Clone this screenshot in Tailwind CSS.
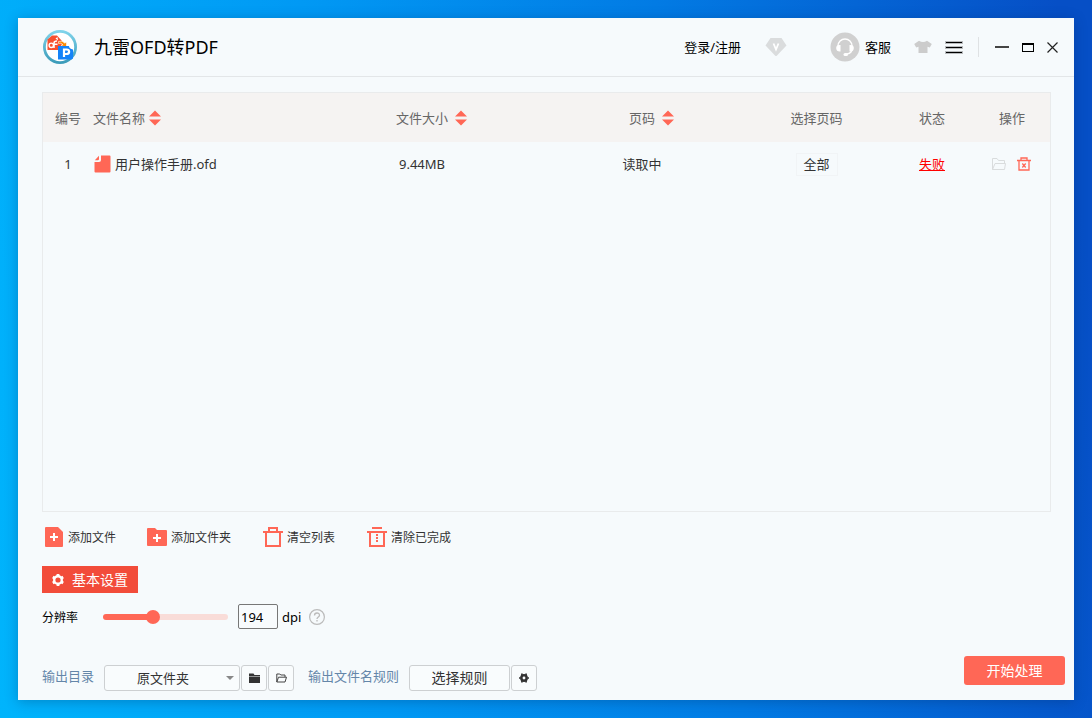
<!DOCTYPE html>
<html lang="zh-CN">
<head>
<meta charset="utf-8">
<meta name="viewport" content="width=device-width, initial-scale=1">
<title>九雷OFD转PDF</title>
<script src="https://cdn.jsdelivr.net/npm/@tailwindcss/browser@4"></script>
</head>
<body class="flex min-h-screen bg-[linear-gradient(83deg,#00b4fc_0%,#0199f4_33%,#027be4_63%,#064fc6_97%)] p-[18px] font-['Noto_Sans','Noto_Sans_CJK_SC',sans-serif] text-[13px] leading-5 text-[#333]">
<div class="flex flex-1 flex-col bg-[#f6fafc] shadow-[0_2px_12px_rgba(0,40,90,0.3)]">

  <header class="flex h-[59px] shrink-0 items-center border-b border-[#e3e6e8] pr-4 pl-6 text-black">
    <svg class="size-9" viewBox="0 0 36 36" aria-hidden="true">
      <defs><linearGradient id="ring" x1="0" y1="0" x2="0" y2="1"><stop offset="0" stop-color="#7fd3ea"/><stop offset="1" stop-color="#3c9cba"/></linearGradient></defs>
      <circle cx="18" cy="18" r="15.6" fill="#fff" stroke="url(#ring)" stroke-width="2.800"/>
      <path d="M5.500 10.500L10 6.500h5L20 12v9H5.500z" fill="#f8502f"/>
      <path d="M13.500 9.500l2-1.500.5 3.500z" fill="#fff"/>
      <circle cx="9.300" cy="16.300" r="2.200" fill="none" stroke="#fff" stroke-width="1.400"/>
      <path d="M12 19v-5q0-2 3-2M11.500 15.200h4" fill="none" stroke="#fff" stroke-width="1.500"/>
      <path d="M16.500 12.500q4-1.500 6 1.500l2-.8v5.300l-5.500-2 1.700-1q-1.500-2-4.200-1z" fill="#ff8a00" stroke="#fff" stroke-width=".6"/>
      <path d="M16 17h11q0 2.500 4 3.500v9l-1.500 1H16z" fill="#1583f8"/>
      <path d="M22 28v-7.500h2.500c3.500 0 3.500 4.500 0 4.500h-3.500" fill="none" stroke="#fff" stroke-width="2.200"/>
    </svg>
    <h1 class="ml-4 text-lg">九雷OFD转PDF</h1>
    <div class="ml-auto flex items-center">
      <a href="#" class="mr-6">登录/注册</a>
      <button type="button" aria-label="会员" class="mr-[43px]">
        <svg class="h-5 w-[22px]" viewBox="0 0 22 20"><path d="M5.500 1h11L21.500 8.500 12 18.500q-1 1-2 0L.5 8.500z" fill="#dadcdd"/><path d="M8.500 6.500l2.500 6 2.500-6" fill="none" stroke="#fff" stroke-width="1.800"/></svg>
      </button>
      <a href="#" class="mr-[23px] flex items-center gap-[5px]">
        <svg class="size-[30px]" viewBox="0 0 30 30" aria-hidden="true"><circle cx="15" cy="15" r="14.500" fill="#d0d0d0"/><path d="M8 15v-1a7 7 0 0 1 14 0v3q0 4-5 5" fill="none" stroke="#fff" stroke-width="1.400"/><path d="M10.500 13v6.500q-4 .5-4.300-3.200t4.300-3.300zM19.500 13v6.500q4 .5 4.300-3.200t-4.300-3.300z" fill="#fff"/><rect x="13.500" y="21" width="4.500" height="3" rx="1.500" fill="#fff"/></svg>
        <span>客服</span>
      </a>
      <button type="button" aria-label="皮肤" class="mr-[14px]">
        <svg class="h-[14px] w-[18px]" viewBox="0 0 18 14"><path d="M5 .8q4 2.500 8 0L17.800 4l-2 3.500-2.300-.8V13h-9V6.700l-2.300.8L.2 4z" fill="#ccc"/></svg>
      </button>
      <button type="button" aria-label="菜单" class="flex w-4 flex-col gap-1">
        <span class="h-px bg-black outline outline-[#00000040]"></span><span class="h-px bg-black outline outline-[#00000040]"></span><span class="h-px bg-black outline outline-[#00000040]"></span>
      </button>
      <span class="mx-4 h-5 w-px bg-[#dfe2e4]"></span>
      <button type="button" aria-label="最小化" class="mr-[13px] h-[2px] w-[14px] bg-[#444]"></button>
      <button type="button" aria-label="最大化" class="mr-[13px] h-[9px] w-3 border border-t-2 border-black"></button>
      <button type="button" aria-label="关闭"><svg class="size-[11px]" viewBox="0 0 11 11"><path d="M.5 .5l10 10M10.500 .5l-10 10" stroke="#222" stroke-width="1.200"/></svg></button>
    </div>
  </header>

  <main class="flex flex-1 flex-col pt-[15px] pr-[23px] pl-6">
    <div class="min-h-[420px] flex-1 border border-[#e9ebec]">
      <table class="w-full table-fixed border-collapse">
        <colgroup><col class="w-[50px]"><col><col class="w-[222px]"><col class="w-[218px]"><col class="w-[131px]"><col class="w-[100px]"><col class="w-[68px]"></colgroup>
        <thead class="h-[49px] bg-[#f5f3f2] text-[#666]">
          <tr>
            <th class="p-0 font-normal">编号</th>
            <th class="p-0 font-normal"><button type="button" class="flex items-center gap-1">文件名称<svg class="h-4 w-3" viewBox="0 0 12 16" fill="#ff6756" aria-hidden="true"><path d="M6 .5L12 6.500H0zM6 15.500L0 9.500h12z"/></svg></button></th>
            <th class="p-0 font-normal"><button type="button" class="mx-auto flex items-center gap-[7px] pl-[19px]">文件大小<svg class="h-4 w-3" viewBox="0 0 12 16" fill="#ff6756" aria-hidden="true"><path d="M6 .5L12 6.500H0zM6 15.500L0 9.500h12z"/></svg></button></th>
            <th class="p-0 font-normal"><button type="button" class="mx-auto flex items-center gap-[7px] pl-[19px]">页码<svg class="h-4 w-3" viewBox="0 0 12 16" fill="#ff6756" aria-hidden="true"><path d="M6 .5L12 6.500H0zM6 15.500L0 9.500h12z"/></svg></button></th>
            <th class="p-0 font-normal">选择页码</th>
            <th class="p-0 font-normal">状态</th>
            <th class="py-0 pr-2 pl-0 font-normal">操作</th>
          </tr>
        </thead>
        <tbody>
          <tr class="h-11 text-center">
            <td class="p-0">1</td>
            <td class="p-0"><div class="flex items-center gap-1"><svg class="ml-px h-[18px] w-[17px]" viewBox="0 0 17 18" aria-hidden="true"><path d="M7 .5h8.500q1 0 1 1v15q0 1-1 1H1.500q-1 0-1-1V7H5q2 0 2-2zM5 .8V4q0 1.200-1.200 1.200H.8z" fill="#ff6756"/></svg>用户操作手册.ofd</div></td>
            <td class="p-0">9.44MB</td>
            <td class="p-0">读取中</td>
            <td class="p-0"><button type="button" class="h-[23px] w-[42px] border border-[#f1f4f6]">全部</button></td>
            <td class="p-0"><a href="#" class="text-[#f00] underline">失败</a></td>
            <td class="py-0 pr-[10px] pl-0">
              <div class="flex items-center justify-center gap-[11px]">
                <button type="button" aria-label="打开文件夹"><svg class="h-3 w-[14px]" viewBox="0 0 14 12" fill="none" stroke="#d9dcdd"><path d="M.5 11.500V.5h4.500L6.500 2.500H12.500V5.500M.5 11.500L3 5.500H13.500L12.500 11.500z"/></svg></button>
                <button type="button" aria-label="删除"><svg class="h-[14px] w-[14px]" viewBox="0 0 14 14" fill="none" stroke="#ff6756" stroke-width="1.300"><path d="M0 3.500h14M4 3.500V1h6v2.500M2 3.500V13h10V3.500"/><path d="M5.300 6.500l3.400 4M8.700 6.500l-3.400 4"/></svg></button>
              </div>
            </td>
          </tr>
        </tbody>
      </table>
    </div>

    <div class="mt-[14px] flex items-center pl-[2px] text-xs leading-5">
      <button type="button" class="mr-[31px] flex items-center gap-1"><svg class="size-5" viewBox="0 0 20 20" aria-hidden="true"><path d="M1 1q0-1 1-1h12l5 5v14q0 1-1 1H2q-1 0-1-1z" fill="#ff6756"/><path d="M10 6v8M6 10h8" stroke="#fff" stroke-width="2"/></svg><span class="pt-[2px]">添加文件</span></button>
      <button type="button" class="mr-8 flex items-center gap-1"><svg class="size-5" viewBox="0 0 20 20" aria-hidden="true"><path d="M0 2q0-1 1-1h7l2 2h9q1 0 1 1v14q0 1-1 1H1q-1 0-1-1z" fill="#ff6756"/><path d="M10 7v8M6 11h8" stroke="#fff" stroke-width="2"/></svg><span class="pt-[2px]">添加文件夹</span></button>
      <button type="button" class="mr-8 flex items-center gap-1"><svg class="size-5" viewBox="0 0 20 20" fill="none" stroke="#ff6756" stroke-width="2" aria-hidden="true"><path d="M0 5h20M6 5V1h8v4M3 5v14h14V5"/></svg><span class="pt-[2px]">清空列表</span></button>
      <button type="button" class="flex items-center gap-1"><svg class="size-5" viewBox="0 0 20 20" fill="none" stroke="#ff6756" stroke-width="2" aria-hidden="true"><path d="M0 5h20M5 1h10M3 5v14h14V5"/><path d="M10 7v8" stroke-dasharray="2 1"/></svg><span class="pt-[2px]">清除已完成</span></button>
    </div>

    <button type="button" class="mt-[18px] flex h-[27px] w-24 items-center gap-2 bg-[#f24c3a] pl-[10px] text-sm text-white">
      <svg class="size-3" viewBox="0 0 12 12" fill="none" stroke="#fff" aria-hidden="true"><circle cx="6" cy="6" r="3.800" stroke-width="2.400"/><path d="M6 0v2M6 10v2M.8 3l1.700 1M9.500 8l1.700 1M.8 9l1.700-1M9.500 4l1.700-1" stroke-width="2.800"/></svg>基本设置
    </button>

    <div class="mt-[11px] flex items-center text-black">
      <label for="dpi-range" class="w-[61px] pt-[2px] text-xs">分辨率</label>
      <input id="dpi-range" type="range" min="0" max="100" value="39" class="h-[6px] w-[125px] appearance-none rounded-full bg-linear-to-r from-[#ff6756] from-40% to-[#f9dcd8] to-40% [&::-webkit-slider-thumb]:size-[14px] [&::-webkit-slider-thumb]:appearance-none [&::-webkit-slider-thumb]:rounded-full [&::-webkit-slider-thumb]:bg-[#ff6756]">
      <input id="dpi" type="text" value="194" class="ml-[10px] h-[25px] w-10 rounded-[2px] border border-[#777] bg-[#f8fbfd] px-[2px]">
      <label for="dpi" class="ml-1">dpi</label>
      <button type="button" aria-label="帮助" class="ml-2"><svg class="size-4" viewBox="0 0 16 16" fill="none" stroke="#bbb"><circle cx="8" cy="8" r="7.400" stroke-width="1.200"/><path d="M5.500 6.500c0-3.300 5-3.300 5-.3 0 1.800-2.500 1.800-2.500 3.800M8 11v1.500" stroke-width="1.300"/></svg></button>
    </div>
  </main>

  <footer class="mt-[27px] flex h-11 shrink-0 items-start pr-[9px] pl-6">
    <label for="out-dir" class="mt-[10px] w-[62px] text-[#6486a9]">输出目录</label>
    <div class="mt-[9px] grid w-[136px] items-center">
      <select id="out-dir" class="col-start-1 row-start-1 h-[26px] w-full appearance-none rounded-[3px] border border-[#cdd0d2] bg-[#f9fcfd] pl-8"><option>原文件夹</option></select>
      <svg class="pointer-events-none col-start-1 row-start-1 mr-[6px] h-1 w-2 justify-self-end" viewBox="0 0 8 4" aria-hidden="true"><path d="M0 0h8L4 4z" fill="#888"/></svg>
    </div>
    <button type="button" aria-label="选择目录" class="mt-[9px] ml-px flex h-[26px] w-[26px] items-center justify-center rounded-[3px] border border-[#cdd0d2] bg-[#f9fcfd]"><svg class="h-[10px] w-[11px]" viewBox="0 0 11 10" fill="#333"><path d="M0 .5h4.500L5.500 2H11v1H0zM0 3.500h11V10H0z"/></svg></button>
    <button type="button" aria-label="打开目录" class="mt-[9px] ml-px flex h-[26px] w-[26px] items-center justify-center rounded-[3px] border border-[#cdd0d2] bg-[#f9fcfd]"><svg class="h-[10px] w-[11px]" viewBox="0 0 11 10" fill="none" stroke="#444"><path d="M.8 9V1h3l1 1H9v2M.8 9L2.500 4.200h8L9 9z"/></svg></button>
    <span class="mt-[10px] ml-[14px] w-[101px] text-[#6486a9]">输出文件名规则</span>
    <button type="button" class="mt-[9px] h-[26px] w-[101px] rounded-[3px] border border-[#cdd0d2] bg-[#f9fcfd] text-sm">选择规则</button>
    <button type="button" aria-label="规则设置" class="mt-[9px] ml-px flex h-[26px] w-[26px] items-center justify-center rounded-[3px] border border-[#cdd0d2] bg-[#f9fcfd]"><svg class="size-[10px]" viewBox="0 0 12 12" fill="none" stroke="#333"><circle cx="6" cy="6" r="3.200" stroke-width="3"/><path d="M3.500 .5v3M8.500 .5v3M3.500 8.500v3M8.500 8.500v3M0 6h2M10 6h2" stroke-width="2"/></svg></button>
    <button type="button" class="ml-auto h-[29px] w-[101px] rounded-[3px] bg-[#ff6756] text-sm text-white">开始处理</button>
  </footer>
</div>
</body>
</html>
